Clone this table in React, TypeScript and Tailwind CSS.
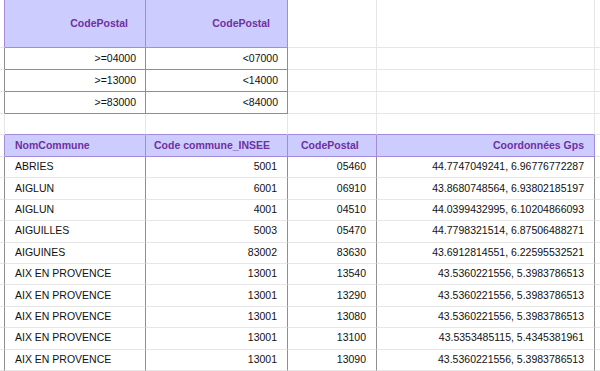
import React from "react";

const LIGHT = "border-[#e6e6e6]";

const lower = [
  ["ABRIES", "5001", "05460", "44.7747049241, 6.96776772287"],
  ["AIGLUN", "6001", "06910", "43.8680748564, 6.93802185197"],
  ["AIGLUN", "4001", "04510", "44.0399432995, 6.10204866093"],
  ["AIGUILLES", "5003", "05470", "44.7798321514, 6.87506488271"],
  ["AIGUINES", "83002", "83630", "43.6912814551, 6.22595532521"],
  ["AIX EN PROVENCE", "13001", "13540", "43.5360221556, 5.3983786513"],
  ["AIX EN PROVENCE", "13001", "13290", "43.5360221556, 5.3983786513"],
  ["AIX EN PROVENCE", "13001", "13080", "43.5360221556, 5.3983786513"],
  ["AIX EN PROVENCE", "13001", "13100", "43.5353485115, 5.4345381961"],
  ["AIX EN PROVENCE", "13001", "13090", "43.5360221556, 5.3983786513"],
];

const upper = [
  [">=04000", "<07000"],
  [">=13000", "<14000"],
  [">=83000", "<84000"],
];

function Gutter({ edge }: { edge: "purple" | "dark" | "light" }) {
  const r =
    edge === "purple"
      ? "border-r-[#a48bdb]"
      : edge === "dark"
        ? "border-r-[#8e8e8e]"
        : "border-r-[#e6e6e6]";
  return <div className={`border-r border-b ${LIGHT} ${r}`} />;
}

function Blank({ last }: { last?: boolean }) {
  return <div className={`border-b ${LIGHT} ${last ? "" : "border-r"}`} />;
}

export default function App() {
  return (
    <div className="w-[600px] h-[371px] overflow-hidden bg-white font-['Liberation_Sans',Arial,sans-serif] text-[10.5px] text-[#111]">
      <div className="grid grid-cols-[5px_141px_142px_89px_218px_5px] grid-rows-[48px_22px_22px_22px_21px_22px_repeat(10,21.4px)]">
        {/* upper header */}
        <Gutter edge="purple" />
        <div className="flex items-center justify-end pr-[17px] bg-[#ccccff] border-r border-b border-[#a48bdb] font-bold text-[#7030a0]">
          CodePostal
        </div>
        <div className="flex items-center justify-end pr-[17px] bg-[#ccccff] border-r border-b border-[#a48bdb] font-bold text-[#7030a0]">
          CodePostal
        </div>
        <Blank />
        <Blank />
        <Blank last />

        {/* upper rows */}
        {upper.map((r, i) => (
          <React.Fragment key={i}>
            <Gutter edge="dark" />
            <div className="flex items-center justify-end pr-[9px] border-r border-b border-[#8e8e8e]">
              {r[0]}
            </div>
            <div className="flex items-center justify-end pr-[9px] border-r border-b border-[#8e8e8e]">
              {r[1]}
            </div>
            <Blank />
            <Blank />
            <Blank last />
          </React.Fragment>
        ))}

        {/* blank spacer row */}
        <Gutter edge="light" />
        <div className="border-r border-r-[#e6e6e6] border-b border-b-[#a48bdb]" />
        <div className="border-r border-r-[#e6e6e6] border-b border-b-[#a48bdb]" />
        <div className="border-r border-r-[#e6e6e6] border-b border-b-[#a48bdb]" />
        <div className="border-r border-r-[#e6e6e6] border-b border-b-[#a48bdb]" />
        <Blank last />

        {/* lower header */}
        <Gutter edge="purple" />
        <div className="flex items-center pl-[10px] bg-[#ccccff] border-r border-b border-[#a48bdb] font-bold text-[#7030a0]">
          NomCommune
        </div>
        <div className="flex items-center pl-[8px] bg-[#ccccff] border-r border-b border-[#a48bdb] font-bold text-[#7030a0]">
          Code commune_INSEE
        </div>
        <div className="flex items-center pl-[13px] bg-[#ccccff] border-r border-b border-[#a48bdb] font-bold text-[#7030a0]">
          CodePostal
        </div>
        <div className="flex items-center justify-end pr-[10px] bg-[#ccccff] border-r border-b border-[#a48bdb] font-bold text-[#7030a0]">
          Coordonnées Gps
        </div>
        <Blank last />

        {/* lower rows */}
        {lower.map((r, i) => (
          <React.Fragment key={i}>
            <Gutter edge="dark" />
            <div className="flex items-center pl-[10px] border-r border-r-[#8e8e8e] border-b border-b-[#e6e6e6]">
              {r[0]}
            </div>
            <div className="flex items-center justify-end pr-[10px] border-r border-r-[#8e8e8e] border-b border-b-[#e6e6e6]">
              {r[1]}
            </div>
            <div className="flex items-center justify-end pr-[10px] border-r border-r-[#8e8e8e] border-b border-b-[#e6e6e6]">
              {r[2]}
            </div>
            <div className="flex items-center justify-end pr-[10px] border-r border-r-[#8e8e8e] border-b border-b-[#e6e6e6]">
              {r[3]}
            </div>
            <Blank last />
          </React.Fragment>
        ))}
      </div>
    </div>
  );
}
